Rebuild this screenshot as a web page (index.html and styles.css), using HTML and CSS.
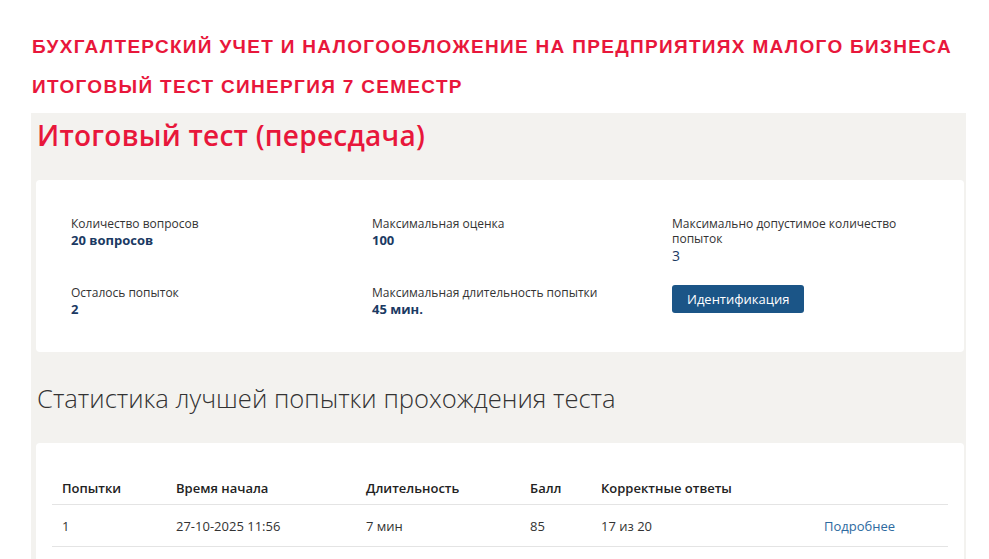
FILE: index.html
```html
<!DOCTYPE html>
<html lang="ru">
<head>
<meta charset="utf-8">
<link rel="stylesheet" href="styles.css">
</head>
<body>
<header class="banner">
  <p class="banner-line">БУХГАЛТЕРСКИЙ УЧЕТ И НАЛОГООБЛОЖЕНИЕ НА ПРЕДПРИЯТИЯХ МАЛОГО БИЗНЕСА</p>
  <p class="banner-line">ИТОГОВЫЙ ТЕСТ СИНЕРГИЯ 7 СЕМЕСТР</p>
</header>
<main class="panel">
  <h1 class="title">Итоговый тест (пересдача)</h1>
  <section class="card info">
    <div class="info-grid">
      <div class="item"><div class="label">Количество вопросов</div><div class="value">20 вопросов</div></div>
      <div class="item"><div class="label">Максимальная оценка</div><div class="value">100</div></div>
      <div class="item"><div class="label">Максимально допустимое количество попыток</div><div class="value plain">3</div></div>
      <div class="item"><div class="label">Осталось попыток</div><div class="value">2</div></div>
      <div class="item"><div class="label">Максимальная длительность попытки</div><div class="value">45 мин.</div></div>
      <div class="item"><button class="btn">Идентификация</button></div>
    </div>
  </section>
  <h2 class="subtitle">Статистика лучшей попытки прохождения теста</h2>
  <section class="card stats">
    <table class="table">
      <thead>
        <tr><th class="c1">Попытки</th><th class="c2">Время начала</th><th class="c3">Длительность</th><th class="c4">Балл</th><th class="c5">Корректные ответы</th><th></th></tr>
      </thead>
      <tbody>
        <tr><td>1</td><td>27-10-2025 11:56</td><td>7 мин</td><td>85</td><td>17 из 20</td><td><a class="link" href="#">Подробнее</a></td></tr>
      </tbody>
    </table>
  </section>
</main>
</body>
</html>
```

FILE: styles.css
```css
* { box-sizing: border-box; }
html, body { margin: 0; padding: 0; background: #fff; }
body { font-family: "Open Sans", "Noto Sans", sans-serif; color: #333; overflow: hidden; }

.banner { padding: 36px 0 0 32px; height: 113px; }
.banner-line {
  margin: 0 0 18px 0;
  font-family: "Liberation Sans", Arial, sans-serif;
  font-weight: bold;
  font-size: 19px;
  line-height: 22px;
  letter-spacing: 1.32px;
  color: #e8173b;
  white-space: nowrap;
}

.panel {
  margin-left: 31px;
  width: 935px;
  background: #f3f2ef;
  padding: 1px 2px 0 5px;
  min-height: 446px;
}
.title {
  margin: 3px 0 0 1px;
  font-family: "Open Sans", sans-serif;
  font-weight: 600;
  font-size: 28px;
  line-height: 37px;
  letter-spacing: 0.25px;
  color: #e8173b;
}
.card { background: #fff; border-radius: 4px; }
.info { margin-top: 26px; height: 172px; padding: 36px 30px 0 35px; }
.info-grid { display: grid; grid-template-columns: 301px 300px 1fr; row-gap: 21px; }
.label { font-size: 12px; line-height: 15px; color: #333; max-width: 236px; }
.value { margin-top: 1px; font-size: 13px; font-weight: 700; color: #1b3a63; line-height: 17px; }
.value.plain { font-weight: 400; font-size: 14px; }
.btn {
  font-family: "Open Sans", sans-serif;
  font-size: 13px;
  color: #fff;
  background: #1b5587;
  border: 0;
  border-radius: 3px;
  height: 28px;
  padding: 0 15px;
  margin-top: 0;
  display: block;
}
.subtitle {
  margin: 29px 0 0 1px;
  font-weight: 300;
  font-size: 25.6px;
  line-height: 36px;
  color: #333;
}
.stats { margin-top: 26px; padding: 28px 16px 0 16px; height: 120px; }
.table { width: 100%; border-collapse: collapse; font-size: 13px; }
.table th { text-align: left; font-weight: 600; color: #222; padding: 8px 10px 7px; border-bottom: 1px solid #e4e4e4; }
.table td { padding: 12px 10px 11px; border-bottom: 1px solid #e4e4e4; color: #333; }
.c1 { width: 114px; }
.c2 { width: 190px; }
.c3 { width: 164px; }
.c4 { width: 71px; }
.c5 { width: 223px; }
.link { color: #2d6aa0; text-decoration: none; }
```
